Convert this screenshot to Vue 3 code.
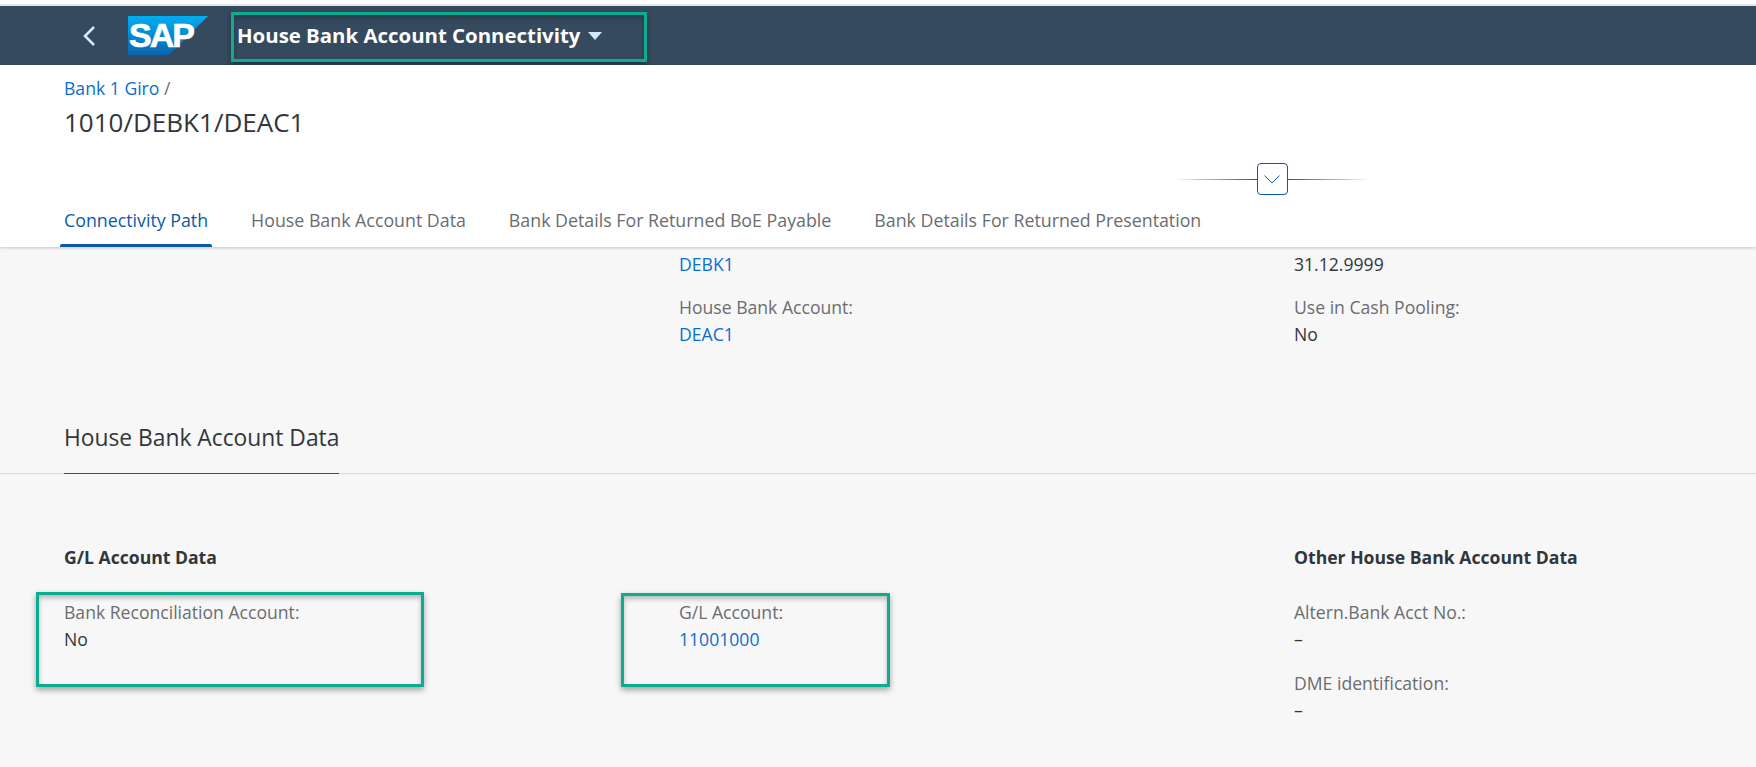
<script setup>
const tabs = ['Connectivity Path', 'House Bank Account Data', 'Bank Details For Returned BoE Payable', 'Bank Details For Returned Presentation']
</script>

<template>
  <div class="page">
    <div class="strip"></div>
    <header class="shell">
      <svg class="back" width="14" height="20" viewBox="0 0 14 20"><path d="M12 1 3 10l9 9" fill="none" stroke="#d3e8fa" stroke-width="2.6"/></svg>
      <svg class="logo" width="80" height="39" viewBox="0 0 80 39">
        <defs><linearGradient id="sapg" x1="0" y1="0" x2="0" y2="1"><stop offset="0" stop-color="#00aeef"/><stop offset="1" stop-color="#0a63ae"/></linearGradient></defs>
        <polygon points="0,0 80,0 41,39 0,39" fill="url(#sapg)"/>
        <text x="1" y="31" class="logotext">SAP</text>
      </svg>
      <span class="apptitle">House Bank Account Connectivity</span>
      <span class="tri"></span>
    </header>
    <section class="objhead">
      <div class="crumb"><a class="link">Bank 1 Giro</a> <span class="sep">/</span></div>
      <h1>1010/DEBK1/DEAC1</h1>
      <div class="collapse">
        <span class="ln ln-l"></span>
        <span class="btn"><svg width="16" height="9" viewBox="0 0 16 9"><path d="M.5.5 8 8 15.500.5" fill="none" stroke="#0a5aa8" stroke-width="1"/></svg></span>
        <span class="ln ln-r"></span>
      </div>
      <nav class="tabs">
        <span v-for="(t, i) in tabs" :key="t" class="tab" :class="{ on: i === 0 }">{{ t }}</span>
      </nav>
    </section>
    <main class="content">
      <div class="grid top">
        <div></div>
        <div class="col">
          <div class="link val">DEBK1</div>
          <div class="lab gap">House Bank Account:</div>
          <div class="link val">DEAC1</div>
        </div>
        <div class="col">
          <div class="val">31.12.9999</div>
          <div class="lab gap">Use in Cash Pooling:</div>
          <div class="val">No</div>
        </div>
      </div>
      <div class="sectitle"><h2>House Bank Account Data</h2></div>
      <div class="grid bottom">
        <div class="col">
          <h3>G/L Account Data</h3>
          <div class="lab">Bank Reconciliation Account:</div>
          <div class="val">No</div>
        </div>
        <div class="col">
          <div class="h3space"></div>
          <div class="lab">G/L Account:</div>
          <div class="link val">11001000</div>
        </div>
        <div class="col">
          <h3>Other House Bank Account Data</h3>
          <div class="lab">Altern.Bank Acct No.:</div>
          <div class="val">–</div>
          <div class="lab gap2">DME identification:</div>
          <div class="val">–</div>
        </div>
      </div>
    </main>
    <div class="mark m1"></div>
    <div class="mark m2"></div>
    <div class="mark m3"></div>
  </div>
</template>

<style scoped>
.page { position: relative; width: 1756px; height: 767px; overflow: hidden; background: #f7f7f7; font-family: "Open Sans", "Noto Sans", sans-serif; font-size: 17.6px; color: #32363a; }
.strip { height: 4px; background: #fff; border-bottom: 2px solid #e4e4e4; }
.shell { height: 59px; background: #354a5f; display: flex; align-items: center; }
.back { margin-left: 82px; }
.logo { margin-left: 32px; }
.logotext { font: 700 34px "Liberation Sans", sans-serif; fill: #fff; stroke: #fff; stroke-width: .7px; letter-spacing: -2px; }
.apptitle { margin-left: 29px; color: #fff; font-weight: 700; font-size: 20.4px; line-height: 26px; margin-top: -2px; }
.tri { margin-left: 8px; width: 0; height: 0; border-left: 7px solid transparent; border-right: 7px solid transparent; border-top: 8px solid #d1e8ff; }
.objhead { position: relative; z-index: 1; height: 182px; background: #fff; box-shadow: 0 1px 3px rgba(0,0,0,.2); padding-left: 64px; box-sizing: border-box; display: flex; flex-direction: column; }
.crumb { margin-top: 12px; line-height: 22px; }
.link { color: #0a6ed1; }
.sep { color: #6a6d70; }
h1 { margin: 7px 0 0; font-size: 26px; font-weight: 400; line-height: 32px; }
.collapse { display: flex; align-items: center; position: absolute; left: 1172px; top: 98px; width: 200px; }
.ln { flex: 1; height: 1px; }
.ln-l { background: linear-gradient(to right, rgba(10,90,168,0), #0a5aa8); }
.ln-r { background: linear-gradient(to left, rgba(10,90,168,0), #0a5aa8); }
.btn { width: 31px; height: 32px; box-sizing: border-box; border: 1px solid #0a5aa8; border-radius: 4px; display: flex; align-items: center; justify-content: center; background: #fff; }
.tabs { margin-top: auto; display: flex; gap: 43px; height: 58px; font-size: 17.8px; }
.tab { color: #6a6d70; line-height: 63px; position: relative; }
.tab.on { color: #0a5aa8; }
.tab.on::after { content: ""; position: absolute; left: -4px; right: -4px; bottom: 0; height: 3px; background: #0a5aa8; border-radius: 2px 2px 0 0; }
.grid { display: grid; grid-template-columns: 615px 615px 1fr; padding-left: 64px; }
.top { padding-top: 4px; height: 129px; box-sizing: border-box; }
.lab { color: #6a6d70; line-height: 27px; }
.val { line-height: 27px; }
.gap { margin-top: 16px; }
.gap2 { margin-top: 17px; }
.sectitle { margin-top: 31px; height: 67px; border-bottom: 1px solid #d9d9d9; padding-left: 64px; box-sizing: border-box; }
h2 { margin: 0; display: inline-block; font-size: 22.8px; font-weight: 400; height: 67px; line-height: 47px; border-bottom: 1px solid #0a5aa8; box-sizing: border-box; padding-top: 7px; }
.bottom { padding-top: 70px; }
h3 { margin: 0 0 28px; font-size: 17.6px; font-weight: 700; line-height: 27px; }
.h3space { height: 55px; }
.mark { position: absolute; box-sizing: border-box; border: 3px solid #0aae8e; box-shadow: 0 3px 6px rgba(0,0,0,.35), inset 0 3px 5px rgba(0,0,0,.25); }
.m1 { left: 231px; top: 12px; width: 416px; height: 50px; }
.m2 { left: 36px; top: 592px; width: 388px; height: 95px; }
.m3 { left: 621px; top: 593px; width: 269px; height: 94px; }
</style>
